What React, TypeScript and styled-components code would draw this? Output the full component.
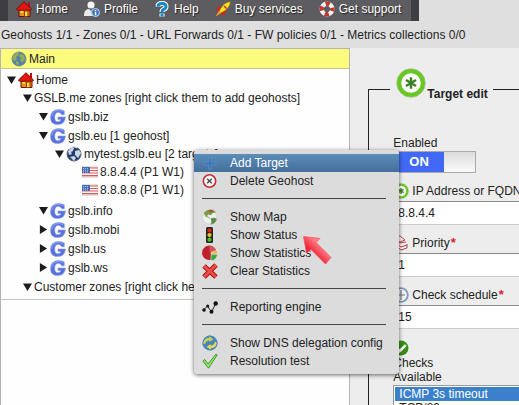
import React from "react";
import styled, { createGlobalStyle } from "styled-components";

const GlobalStyle = createGlobalStyle`
  *, *::before, *::after { box-sizing: border-box; }
  body {
    margin: 0;
    overflow: hidden;
    background: #ededed;
    color: #222;
    font: 12px/18px "Liberation Sans", Arial, sans-serif;
  }
  ul { list-style: none; margin: 0; padding: 0; }
  button, input, select { font: inherit; color: inherit; }
`;

const Page = styled.div`
  position: relative;
  display: flex;
  flex-direction: column;
  height: 100vh;
  overflow: hidden;
`;

const Header = styled.header`
  background: #dfdfdf;
  height: 48px;
  flex: none;
`;

const NavBar = styled.nav`
  display: flex;
  align-items: flex-start;
  gap: 16px;
  width: fit-content;
  height: 21px;
  padding: 0 10px 0 8px;
  border: solid #3d3d42;
  border-width: 0 8px;
  background: #5d5d61;
`;

const NavLink = styled.a`
  display: flex;
  gap: 4px;
  align-items: center;
  color: #fff;
  text-decoration: none;
  white-space: nowrap;
  text-shadow: 1px 1px 1px #222;
`;

const Quota = styled.p`
  margin: 0;
  padding: 5px 0 0 1px;
  white-space: nowrap;
`;

const Body = styled.main`
  display: grid;
  grid-template-columns: minmax(0, 27fr) minmax(0, 13fr);
  flex: 1;
  min-height: 0;
`;

const SidePanel = styled.aside`
  border: 1px solid #b4b4b4;
  background: #fefefe;
  min-height: 0;
`;

const PanelTitle = styled.h1`
  display: flex;
  align-items: center;
  gap: 2px;
  margin: 0;
  height: 20px;
  padding-left: 10px;
  border-bottom: 1px solid #c4c48c;
  background: #fbfb7d;
  font-size: 12px;
  font-weight: normal;
`;

const Tree = styled.ul`
  && { padding: 2px 0 3px 6px; }
  border-bottom: 1px solid #c4c4c4;
`;

const Branch = styled.ul<{ $tail?: boolean }>`
  && { padding: 0 0 ${(p) => (p.$tail ? 1 : 0)}px 16px; }
`;

const Node = styled.div<{ $tall?: boolean }>`
  display: flex;
  align-items: center;
  gap: 2px;
  height: ${(p) => (p.$tall ? 19 : 18)}px;
  white-space: nowrap;
`;

const Twisty = styled.button<{ $closed?: boolean }>`
  flex: none;
  width: 9px;
  height: 9px;
  padding: 0;
  border: 0;
  background: #1c1c1c;
  clip-path: ${(p) =>
    p.$closed ? "polygon(10% 0, 90% 50%, 10% 100%)" : "polygon(0 10%, 100% 10%, 50% 95%)"};
`;

const Gap = styled.span`
  flex: none;
  width: 9px;
`;

const Icon = styled.svg`
  flex: none;
  display: block;
`;

const Content = styled.section`
  padding: 20px 0 0 18px;
  min-width: 0;
`;

const Form = styled.fieldset`
  margin: 0 -8px 0 0;
  padding: 25px 0 0 24px;
  min-width: 0;
  height: 400px;
  border: 1px solid #222;
`;

const Legend = styled.legend`
  display: flex;
  align-items: flex-start;
  gap: 1px;
  padding: 0 5px 8px 6px;
  margin-left: -3px;
  font-weight: bold;
`;

const LegendText = styled.span`
  padding-top: 18px;
  line-height: 16px;
  white-space: nowrap;
`;

const Caption = styled.div`
  line-height: 16px;
`;

const Switch = styled.label`
  display: flex;
  position: relative;
  width: 83px;
  height: 22px;
  border: 1px solid #aaa;
  background: linear-gradient(#dcdcdc, #fafafa);
`;

const SwitchInput = styled.input`
  position: absolute;
  inset: 0;
  margin: 0;
  opacity: 0;
`;

const SwitchOn = styled.span`
  width: 50px;
  padding-left: 15px;
  background: #4169f5;
  color: #fff;
  font-size: 13px;
  font-weight: bold;
  line-height: 20px;
`;

const Field = styled.div`
  display: flex;
  flex-direction: column;
  height: 52px;
`;

const FieldLabel = styled.label`
  display: flex;
  align-items: center;
  gap: 3px;
  height: 28px;
  padding-top: 8px;
  white-space: nowrap;
`;

const Required = styled.span`
  color: #d8222c;
  font-size: 13px;
  font-weight: bold;
  line-height: 16px;
  margin-left: -2px;
`;

const TextInput = styled.input`
  width: 100%;
  height: 24px;
  padding: 0 4px;
  border: 1px solid #ccc;
  border-top-color: #888;
  border-right: 0;
  background: #fff;
`;

const Checks = styled.div`
  display: flex;
  flex-direction: column;
  padding-top: 11px;
  line-height: 14px;
`;

const CheckList = styled.select`
  width: 100%;
  height: 80px;
  margin-top: 1px;
  padding: 1px;
  border: 1px solid #999;
  border-radius: 0;
  background: #fff;
  outline: none;
`;

const CheckOption = styled.option`
  padding: 0 4px;
  min-height: 0;
  line-height: 14px;
  &:checked {
    background: #3a80cb linear-gradient(#3a80cb, #3a80cb);
    color: #fff;
  }
`;

const Menu = styled.div`
  position: absolute;
  left: 194px;
  top: 150px;
  padding: 4px 0;
  border-radius: 3px;
  background: #dcdcdc;
  box-shadow: 0 1px 4px rgba(0, 0, 0, 0.6);
`;

const MenuItem = styled.button<{ $active?: boolean }>`
  display: flex;
  align-items: center;
  gap: 12px;
  width: 100%;
  height: 18px;
  padding: 0 16px 0 8px;
  border: 0;
  background: ${(p) => (p.$active ? "linear-gradient(#5b8db9, #446f9c)" : "transparent")};
  && { color: ${(p) => (p.$active ? "#fff" : "#222")}; }
  white-space: nowrap;
`;

const Separator = styled.hr`
  height: 1px;
  margin: 8px 13px 9px 8px;
  border: 0;
  background: #444;
`;

const Pointer = styled.svg`
  position: absolute;
  left: 302px;
  top: 235px;
`;

type Kind =
  | "home" | "user" | "help" | "rocket" | "buoy" | "globe" | "g" | "world" | "flag"
  | "plus" | "remove" | "map" | "light" | "pie" | "clear" | "report" | "sync" | "tick"
  | "star" | "stack" | "clock" | "check";

const art: Record<Kind, React.ReactNode> = {
  home: (
    <>
      <path d="M12 1h2v5h-2z" fill="#b31313" />
      <path d="M3 8h11v7.5H3z" fill="#f08a16" stroke="#5d1508" />
      <path d="M.5 8 8 .8 15.5 8l-1 1.2h-13z" fill="#e3170f" stroke="#7c0c08" />
      <path d="M4.5 10H7v2H4.5z" fill="#ffdf32" />
      <path d="M8.5 10H12v5.5H8.5z" fill="#ffdf32" stroke="#9b3108" />
    </>
  ),
  user: (
    <>
      <circle cx="7" cy="4" r="3.6" fill="#f4f4f4" />
      <path d="M0 15c0-5 2-7 5-7l2 2 3-2c3 0 4 3 4 7z" fill="#e8e8e8" />
      <circle cx="11.5" cy="11.5" r="4" fill="#3e74bd" stroke="#c4d8f2" />
      <path d="M10.8 9h1.5v1.2h-1.5zm0 2h1.5v3.2h-1.5z" fill="#fff" />
    </>
  ),
  help: (
    <g fill="none" stroke="#fff" strokeWidth="5">
      <path d="M4 5.5Q4 2.5 8 2.5t4 3Q12 7.5 9.5 8.5 8 9 8 11M8 12.5v3" />
      <path d="M4 5.5Q4 2.5 8 2.5t4 3Q12 7.5 9.5 8.5 8 9 8 11M8 12.5v3" stroke="#168ac7" strokeWidth="3" />
    </g>
  ),
  rocket: (
    <>
      <path d="M7 5 3 6 1 10l4-.5zM11 9l-1 4-4 2 1-4z" fill="#d6201a" />
      <path d="M15.5.5Q9 1 5 8.5L4 11l1.5 1L8 11q7-4 7.5-10.5z" fill="#fae02b" stroke="#7d6810" strokeWidth=".7" />
      <path d="m4 10-3.5 5.5L6 12z" fill="#ff9e19" />
      <path d="m9 5 2.5 2.5" stroke="#cc3d12" strokeWidth="1.6" />
    </>
  ),
  buoy: (
    <>
      <circle cx="8" cy="8" r="5.3" fill="none" stroke="#f5f5f5" strokeWidth="4.4" />
      <circle cx="8" cy="8" r="5.3" fill="none" stroke="#c2382b" strokeWidth="4.4" strokeDasharray="4.16 4.16" strokeDashoffset="2.08" />
    </>
  ),
  globe: (
    <>
      <circle cx="8" cy="8" r="7" fill="#4d82ad" stroke="#80868a" />
      <path d="M2 4q4-4 6-2l-1 3-2 1 1 2-2 2Q0 9 2 4zM9 3l4 1 1 4-3 4-2-3 1-2-2-2zM5 10l3 1-1 3q-3-1-2-4z" fill="#92ad54" />
    </>
  ),
  g: (
    <>
      <path d="M14.3 5.8V1.9Q12 .4 8.6.4.5.8.5 8.4q0 7.2 7.3 7.2 7-.2 7.7-7.6H8v2.6h3q-.8 2.2-3 2.2-3.3 0-3.3-4.6T8.2 3.3q2.6 0 3.6 2.5z" fill="#5772dc" stroke="#8b9ee8" strokeWidth=".6" />
      <path d="M13.3 3Q11.5 1.5 8.7 1.5 2.4 1.8 1.8 7.6" fill="none" stroke="#8ea2f4" />
    </>
  ),
  world: (
    <>
      <circle cx="8" cy="8" r="7" fill="#263b65" stroke="#53637f" />
      <path d="M2 5q4-5 6-3L7 5 5 6l1 2-3 1zM9 5l4-1 2 3-3 5-3-3zM4 11l4-1 2 2-2 3z" fill="#c5d8ed" />
      <path d="M3 3q4-4 8-1" stroke="#fff" fill="none" />
    </>
  ),
  flag: (
    <>
      <path d="M0 3h16v10H0z" fill="#fff" stroke="#b79999" strokeWidth=".6" />
      <path d="M0 4h16M0 6.5h16M0 9h16M0 11.7h16" stroke="#dd5957" strokeWidth="1.2" />
      <path d="M0 3h8v6H0z" fill="#426bb4" />
      <path d="M1 4.5h6M1 6.3h6M1 8h6" stroke="#d7e4ff" strokeWidth=".8" strokeDasharray="1 1" />
    </>
  ),
  plus: <path d="M6.5 3h3v4H14v3H9.5v4h-3v-4H2V7h4.5z" fill="#4278b8" stroke="#5d94cb" strokeWidth=".6" />,
  remove: (
    <>
      <circle cx="7.5" cy="8" r="6.2" fill="#f7f3f2" stroke="#c2313b" strokeWidth="1.6" />
      <path d="m5.2 5.7 4.6 4.6m0-4.6-4.6 4.6" stroke="#444" strokeWidth="1.3" />
    </>
  ),
  map: (
    <>
      <circle cx="7.5" cy="8" r="7" fill="#eef0ee" stroke="#c9ccc9" strokeWidth=".6" />
      <path d="M2 3.5q4-4 9-2.7l3 2.4-3.5 1L9 6.2 6 5.5l-1 2L2.4 6z" fill="#7f9a4a" />
      <path d="M6 1.8 9.5 1l2 1.5-3 1z" fill="#b0452f" />
      <path d="m3 7 3 1 2 1.6M9 9.5l4-.6 1.5 1.6-2 3.4-3.4 1.4.4-2.8z" fill="#578a47" stroke="#6e9656" strokeWidth=".6" />
    </>
  ),
  light: (
    <>
      <rect x="4" y="0" width="7" height="16" rx="1.5" fill="#252525" />
      <circle cx="7.5" cy="3.3" r="2.1" fill="#df2018" />
      <circle cx="7.5" cy="8" r="2.1" fill="#f4bf21" />
      <circle cx="7.5" cy="12.7" r="2.1" fill="#3fc71f" />
    </>
  ),
  pie: (
    <>
      <circle cx="7.2" cy="7.8" r="7.2" fill="#bf202b" />
      <path d="M7.5 7V.8q5 .4 6.5 4.7z" fill="#d5545a" />
      <path d="M9 9V7.2l6.5-2 .3 3.8z" fill="#f1b35c" stroke="#f5eadb" strokeWidth=".6" />
      <path d="M9 9.6h6.6q-.6 3.8-4.2 5.9H9z" fill="#35a83e" stroke="#e4eddb" strokeWidth=".6" />
    </>
  ),
  clear: (
    <>
      <path d="m2 3 12 11M14 2 2 14" stroke="#a91515" strokeWidth="5" />
      <path d="m2 3 12 11M14 2 2 14" stroke="#ed4b47" strokeWidth="3" />
    </>
  ),
  report: (
    <>
      <path d="m1.5 11 4-4 4 6L14 4" fill="none" stroke="#222" />
      <g fill="#111"><circle cx="2" cy="11" r="1.8" /><circle cx="5.7" cy="7" r="1.5" /><circle cx="9.5" cy="12.7" r="2" /><circle cx="13.7" cy="4.5" r="2.2" /></g>
    </>
  ),
  sync: (
    <>
      <circle cx="8" cy="8" r="7.6" fill="#4388c4" />
      <path d="M1 9.5Q.5 3 7 2.2V.6l5 3.6-5 3.4V5.8Q3.6 6.2 3.5 9.5z" fill="#c3cf62" stroke="#3a719f" strokeWidth=".6" />
      <path d="M15 6.5Q15.5 13 9 13.8v1.6l-5-3.6 5-3.4v1.8q3.4-.4 3.5-3.7z" fill="#e0d568" stroke="#3a719f" strokeWidth=".6" />
    </>
  ),
  tick: <path d="m.8 8 2-1.5L6 11 14 1l1.2 1L6.5 15.2z" fill="#8ee565" stroke="#378e29" strokeWidth=".9" />,
  star: (
    <>
      <circle cx="8" cy="8" r="7.6" fill="#67c821" stroke="#a3bf8c" strokeWidth=".4" />
      <circle cx="8" cy="8" r="5.2" fill="#fff" />
      <path d="M8 4.9v6.2M5.3 6.4l5.4 3.2m0-3.2L5.3 9.6" stroke="#3c8128" strokeWidth="1.3" />
    </>
  ),
  stack: (
    <path d="m1 3 6-2 5 4-5 2zm0 4 6 1 6-1M2 7l6 5 6-2M2 10l6 5 6-2V9" fill="#f7efef" stroke="#b7474b" />
  ),
  clock: (
    <>
      <circle cx="8" cy="8" r="6.8" fill="#edf0f5" stroke="#8399bd" strokeWidth="1.8" />
      <path d="M8 3v10M4 8h8" stroke="#777" strokeWidth="1.2" />
    </>
  ),
  check: (
    <>
      <circle cx="8" cy="8" r="7.5" fill="#368f18" />
      <path d="m3.5 7.5 3.2 3.7 6-6" fill="none" stroke="#fff" strokeWidth="2.6" />
    </>
  ),
};

const Glyph = ({ kind, size = 16 }: { kind: Kind; size?: number }) => (
  <Icon width={size} height={size} viewBox="0 0 16 16" aria-hidden="true">{art[kind]}</Icon>
);

const navigation: [Kind, string][] = [
  ["home", "Home"], ["user", "Profile"], ["help", "Help"], ["rocket", "Buy services"], ["buoy", "Get support"],
];

interface RowProps {
  label: string;
  icon?: Kind;
  closed?: boolean;
  leaf?: boolean;
  tall?: boolean;
  children?: React.ReactNode;
}

const Row = ({ label, icon, closed, leaf, tall, children }: RowProps) => (
  <li>
    <Node $tall={tall}>
      {leaf ? <Gap /> : <Twisty $closed={closed} aria-label={`Toggle ${label}`} aria-expanded={!closed} />}
      {icon && <Glyph kind={icon} />}
      <span>{label}</span>
    </Node>
    {children}
  </li>
);

const menuGroups: [Kind, string][][] = [
  [["plus", "Add Target"], ["remove", "Delete Geohost"]],
  [["map", "Show Map"], ["light", "Show Status"], ["pie", "Show Statistics"], ["clear", "Clear Statistics"]],
  [["report", "Reporting engine"]],
  [["sync", "Show DNS delegation config"], ["tick", "Resolution test"]],
];

const fields: { id: string; icon: Kind; label: string; value: string; required?: boolean }[] = [
  { id: "address", icon: "star", label: "IP Address or FQDN", value: "8.8.4.4" },
  { id: "priority", icon: "stack", label: "Priority", value: "1", required: true },
  { id: "schedule", icon: "clock", label: "Check schedule", value: "15", required: true },
];

export default function App() {
  return (
    <Page>
      <GlobalStyle />
      <Header>
        <NavBar>
          {navigation.map(([icon, label]) => (
            <NavLink key={label} href="#"><Glyph kind={icon} />{label}</NavLink>
          ))}
        </NavBar>
        <Quota>Geohosts 1/1 - Zones 0/1 - URL Forwards 0/1 - FW policies 0/1 - Metrics collections 0/0</Quota>
      </Header>
      <Body>
        <SidePanel>
          <PanelTitle><Glyph kind="globe" />Main</PanelTitle>
          <Tree>
            <Row label="Home" icon="home">
              <Branch>
                <Row label="GSLB.me zones [right click them to add geohosts]">
                  <Branch $tail>
                    <Row label="gslb.biz" icon="g" tall />
                    <Row label="gslb.eu [1 geohost]" icon="g" tall>
                      <Branch $tail>
                        <Row label="mytest.gslb.eu [2 targets]" icon="world">
                          <Branch $tail>
                            <Row label="8.8.4.4 (P1 W1)" icon="flag" leaf />
                            <Row label="8.8.8.8 (P1 W1)" icon="flag" leaf />
                          </Branch>
                        </Row>
                      </Branch>
                    </Row>
                    <Row label="gslb.info" icon="g" tall />
                    <Row label="gslb.mobi" icon="g" closed tall />
                    <Row label="gslb.us" icon="g" closed tall />
                    <Row label="gslb.ws" icon="g" closed tall />
                  </Branch>
                </Row>
                <Row label="Customer zones [right click here to add]" />
              </Branch>
            </Row>
          </Tree>
        </SidePanel>
        <Content>
          <Form>
            <Legend><Glyph kind="star" size={30} /><LegendText>Target edit</LegendText></Legend>
            <Caption id="enabled-caption">Enabled</Caption>
            <Switch>
              <SwitchInput type="checkbox" defaultChecked aria-labelledby="enabled-caption" />
              <SwitchOn>ON</SwitchOn>
            </Switch>
            {fields.map((f) => (
              <Field key={f.id}>
                <FieldLabel htmlFor={f.id}>
                  <Glyph kind={f.icon} />{f.label}{f.required && <Required>*</Required>}
                </FieldLabel>
                <TextInput id={f.id} defaultValue={f.value} />
              </Field>
            ))}
            <Checks>
              <Glyph kind="check" />
              <span>Checks</span>
              <label htmlFor="available">Available</label>
              <CheckList id="available" multiple defaultValue={["icmp"]}>
                <CheckOption value="icmp">ICMP 3s timeout</CheckOption>
                <CheckOption value="tcp">TCP/80</CheckOption>
              </CheckList>
            </Checks>
          </Form>
        </Content>
      </Body>
      <Menu role="menu">
        {menuGroups.map((group, g) => (
          <React.Fragment key={g}>
            {g > 0 && <Separator />}
            {group.map(([icon, label]) => (
              <MenuItem key={label} role="menuitem" $active={label === "Add Target"}>
                <Glyph kind={icon} />{label}
              </MenuItem>
            ))}
          </React.Fragment>
        ))}
      </Menu>
      <Pointer width="30" height="32" viewBox="0 0 30 32" aria-hidden="true">
        <defs>
          <linearGradient id="pointer" x1="0" y1="1" x2="1" y2="0">
            <stop offset=".35" stopColor="#ee2036" /><stop offset=".65" stopColor="#ff8088" />
          </linearGradient>
        </defs>
        <path d="M1.5 1.5 18 3.5l-4 4L29 22.5 23.5 29 9 14.5 4.5 18z" fill="url(#pointer)" stroke="#f25560" strokeWidth=".8" />
      </Pointer>
    </Page>
  );
}
